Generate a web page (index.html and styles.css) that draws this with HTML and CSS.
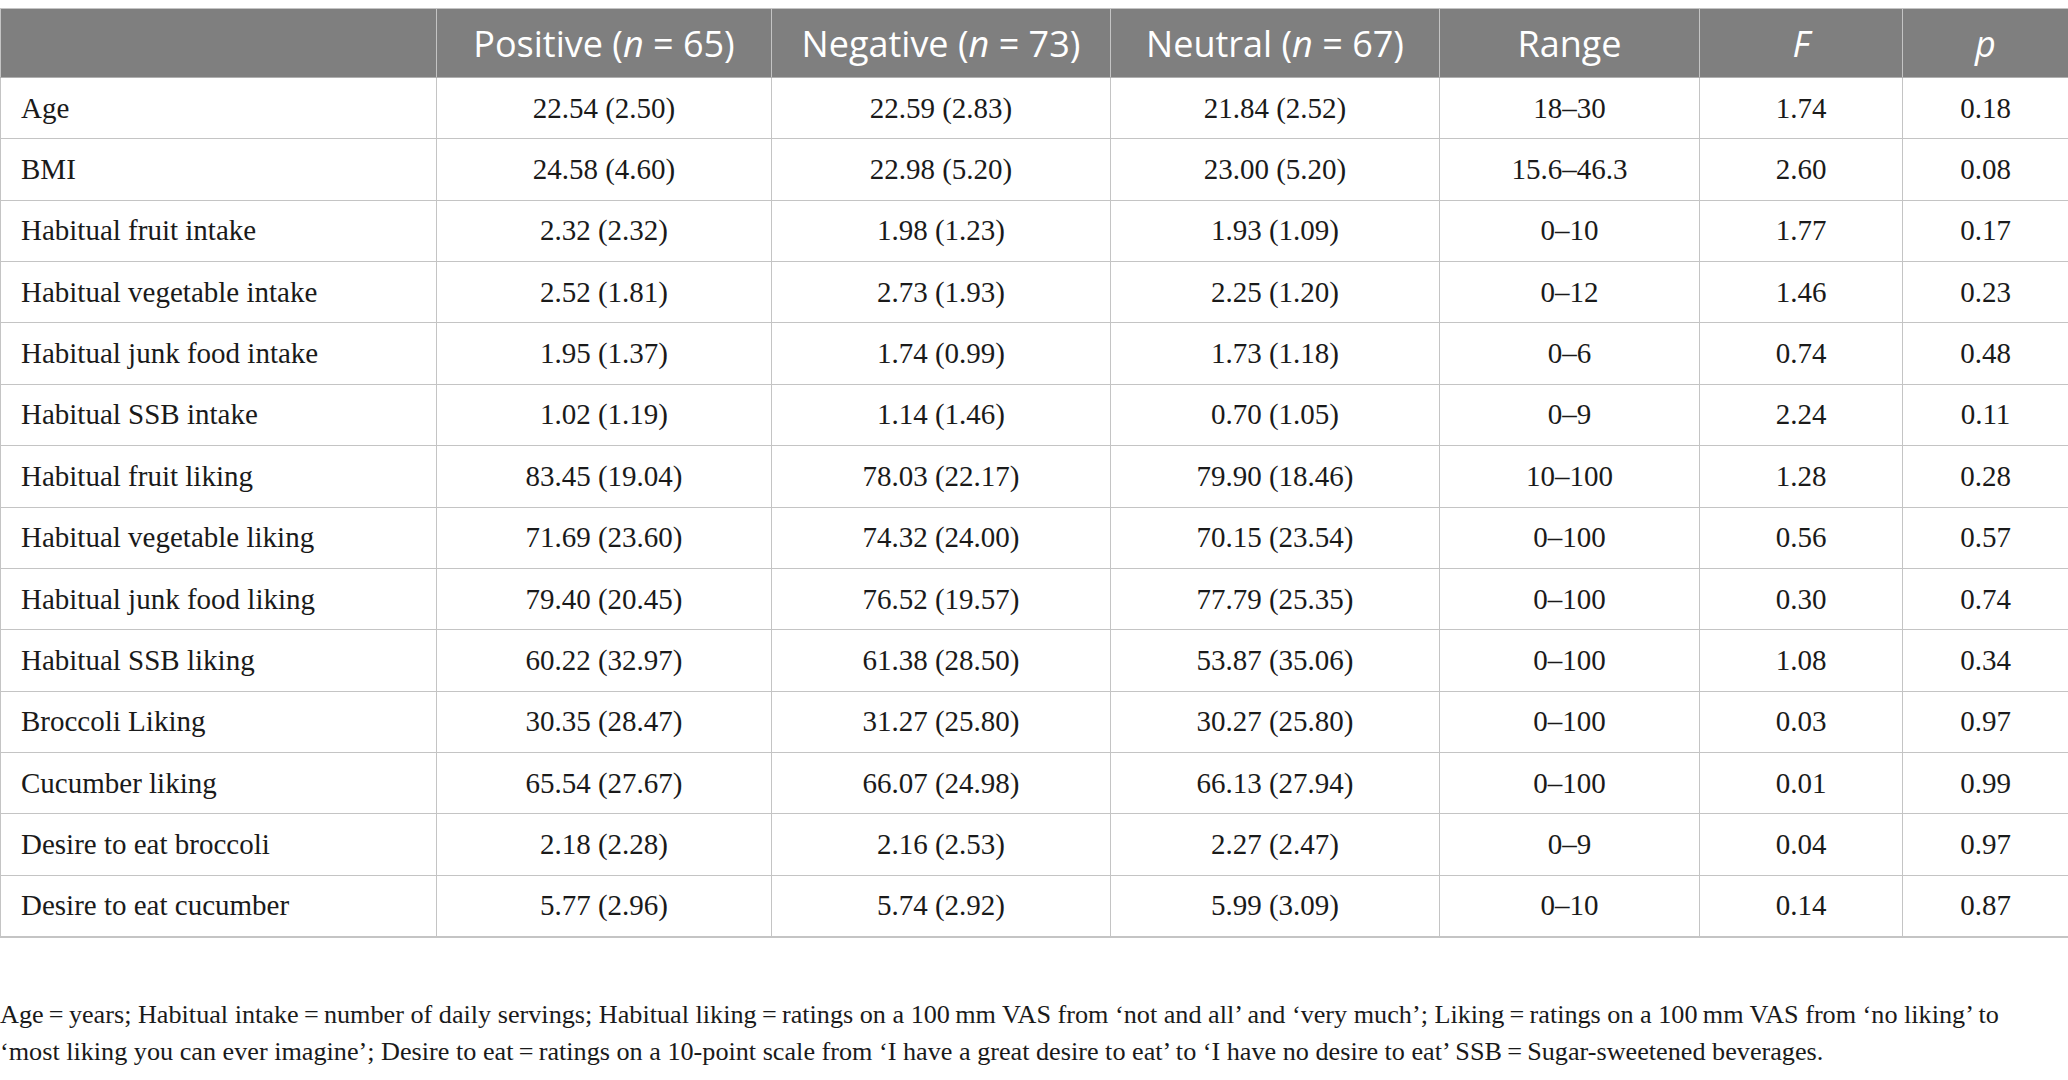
FILE: index.html
```html
<!DOCTYPE html>
<html lang="en">
  <head>
    <meta charset="UTF-8" />
    <meta name="viewport" content="width=device-width, initial-scale=1.0" />
    <title>Participant characteristics</title>

    <link rel="stylesheet" href="styles.css">
  </head>

  <body>
    <div class="table-wrap">
      <table class="data-table">
        <colgroup>
          <col class="col-label" />
          <col class="col-pos" />
          <col class="col-neg" />
          <col class="col-neu" />
          <col class="col-range" />
          <col class="col-f" />
          <col class="col-p" />
        </colgroup>
        <thead>
          <tr>
            <th></th>
            <th>Positive (<i>n</i> = 65)</th>
            <th>Negative (<i>n</i> = 73)</th>
            <th>Neutral (<i>n</i> = 67)</th>
            <th>Range</th>
            <th><i>F</i></th>
            <th><i>p</i></th>
          </tr>
        </thead>
        <tbody>
          <tr><td>Age</td><td>22.54 (2.50)</td><td>22.59 (2.83)</td><td>21.84 (2.52)</td><td>18–30</td><td>1.74</td><td>0.18</td></tr>
          <tr><td>BMI</td><td>24.58 (4.60)</td><td>22.98 (5.20)</td><td>23.00 (5.20)</td><td>15.6–46.3</td><td>2.60</td><td>0.08</td></tr>
          <tr><td>Habitual fruit intake</td><td>2.32 (2.32)</td><td>1.98 (1.23)</td><td>1.93 (1.09)</td><td>0–10</td><td>1.77</td><td>0.17</td></tr>
          <tr><td>Habitual vegetable intake</td><td>2.52 (1.81)</td><td>2.73 (1.93)</td><td>2.25 (1.20)</td><td>0–12</td><td>1.46</td><td>0.23</td></tr>
          <tr><td>Habitual junk food intake</td><td>1.95 (1.37)</td><td>1.74 (0.99)</td><td>1.73 (1.18)</td><td>0–6</td><td>0.74</td><td>0.48</td></tr>
          <tr><td>Habitual SSB intake</td><td>1.02 (1.19)</td><td>1.14 (1.46)</td><td>0.70 (1.05)</td><td>0–9</td><td>2.24</td><td>0.11</td></tr>
          <tr><td>Habitual fruit liking</td><td>83.45 (19.04)</td><td>78.03 (22.17)</td><td>79.90 (18.46)</td><td>10–100</td><td>1.28</td><td>0.28</td></tr>
          <tr><td>Habitual vegetable liking</td><td>71.69 (23.60)</td><td>74.32 (24.00)</td><td>70.15 (23.54)</td><td>0–100</td><td>0.56</td><td>0.57</td></tr>
          <tr><td>Habitual junk food liking</td><td>79.40 (20.45)</td><td>76.52 (19.57)</td><td>77.79 (25.35)</td><td>0–100</td><td>0.30</td><td>0.74</td></tr>
          <tr><td>Habitual SSB liking</td><td>60.22 (32.97)</td><td>61.38 (28.50)</td><td>53.87 (35.06)</td><td>0–100</td><td>1.08</td><td>0.34</td></tr>
          <tr><td>Broccoli Liking</td><td>30.35 (28.47)</td><td>31.27 (25.80)</td><td>30.27 (25.80)</td><td>0–100</td><td>0.03</td><td>0.97</td></tr>
          <tr><td>Cucumber liking</td><td>65.54 (27.67)</td><td>66.07 (24.98)</td><td>66.13 (27.94)</td><td>0–100</td><td>0.01</td><td>0.99</td></tr>
          <tr><td>Desire to eat broccoli</td><td>2.18 (2.28)</td><td>2.16 (2.53)</td><td>2.27 (2.47)</td><td>0–9</td><td>0.04</td><td>0.97</td></tr>
          <tr><td>Desire to eat cucumber</td><td>5.77 (2.96)</td><td>5.74 (2.92)</td><td>5.99 (3.09)</td><td>0–10</td><td>0.14</td><td>0.87</td></tr>
        </tbody>
      </table>
    </div>

    <p class="footnote">
      Age&#8201;=&#8201;years; Habitual intake&#8201;=&#8201;number of daily servings; Habitual liking&#8201;=&#8201;ratings on a 100&#8201;mm VAS from ‘not and all’ and ‘very much’; Liking&#8201;=&#8201;ratings on a 100&#8201;mm VAS from ‘no liking’ to<br />
      ‘most liking you can ever imagine’; Desire to eat&#8201;=&#8201;ratings on a 10-point scale from ‘I have a great desire to eat’ to ‘I have no desire to eat’ SSB&#8201;=&#8201;Sugar-sweetened beverages.
    </p>
  </body>
</html>
```

FILE: styles.css
```css
* {
  margin: 0;
  padding: 0;
  box-sizing: border-box;
}

body {
  font-family: "Liberation Serif", "Times New Roman", serif;
  background-color: #ffffff;
  color: #1a1a1a;
  margin: 0;
}

.table-wrap {
  padding-top: 8px;
}

.data-table {
  width: 2068px;
  border-collapse: collapse;
  table-layout: fixed;
}

.col-label { width: 436px; }
.col-pos { width: 335px; }
.col-neg { width: 339px; }
.col-neu { width: 329px; }
.col-range { width: 260px; }
.col-f { width: 203px; }
.col-p { width: 166px; }

.data-table th {
  background-color: #7f7f7f;
  color: #ffffff;
  font-family: "Open Sans", "Noto Sans", sans-serif;
  font-weight: 400;
  font-size: 36px;
  height: 69px;
  text-align: center;
  border: 1px solid #c4c4c4;
  border-bottom: 1px solid #b0b0b0;
  white-space: nowrap;
}

.data-table td {
  font-size: 29px;
  height: 61.36px;
  text-align: center;
  border: 1px solid #c4c4c4;
  vertical-align: middle;
}

.data-table td:first-child {
  text-align: left;
  padding-left: 20px;
}

.data-table tbody tr:last-child td {
  border-bottom: 2px solid #c4c4c4;
}

.footnote {
  font-size: 26.2px;
  line-height: 37px;
  margin-top: 58px;
  white-space: nowrap;
}
```
